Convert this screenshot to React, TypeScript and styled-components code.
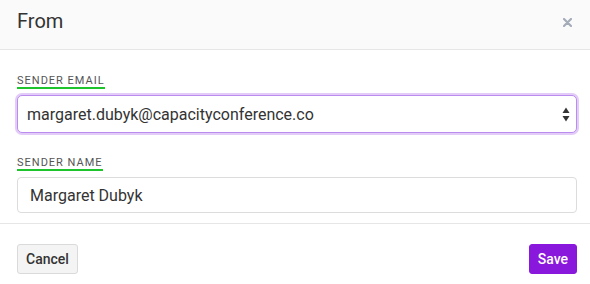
import React from 'react';
import styled, { createGlobalStyle } from 'styled-components';

const GlobalStyle = createGlobalStyle`
  html, body {
    margin: 0;
    padding: 0;
    background: #ffffff;
  }
  body {
    font-family: Roboto, "Liberation Sans", Arial, sans-serif;
    color: #333333;
  }
  * {
    box-sizing: border-box;
  }
`;

const Modal = styled.div`
  width: 590px;
  height: 284px;
  overflow: hidden;
  background: #ffffff;
  display: flex;
  flex-direction: column;
`;

const Header = styled.header`
  height: 50px;
  padding: 9px 18px 0 17px;
  background: #fafafa;
  border-bottom: 1px solid #e6e6e6;
  display: flex;
  align-items: flex-start;
  justify-content: space-between;
`;

const Title = styled.h2`
  margin: 0;
  font-size: 20px;
  line-height: 24px;
  font-weight: 400;
  color: #333333;
`;

const CloseButton = styled.button`
  margin-top: 9px;
  width: 9px;
  height: 9px;
  padding: 0;
  border: none;
  background: none;
  display: flex;
  cursor: pointer;
`;

const Body = styled.div`
  padding: 25px 13px 10px 17px;
  border-bottom: 1px solid #e6e6e6;
`;

const Field = styled.div<{ $spaced?: boolean }>`
  display: flex;
  flex-direction: column;
  align-items: flex-start;
  margin-top: ${p => (p.$spaced ? '24px' : '0')};
`;

const Label = styled.label`
  display: inline-block;
  font-size: 11px;
  line-height: 12px;
  font-weight: 400;
  letter-spacing: 1px;
  text-transform: uppercase;
  color: #555555;
  border-bottom: 2px solid #1ec42b;
  margin-bottom: 6px;
`;

const SelectWrap = styled.div`
  position: relative;
  width: 560px;
`;

const Select = styled.select`
  appearance: none;
  -webkit-appearance: none;
  width: 100%;
  height: 38px;
  padding: 0 30px 0 9px;
  font-family: Roboto, "Liberation Sans", Arial, sans-serif;
  font-size: 16px;
  color: #333333;
  background: #ffffff;
  border: 1px solid #b98ced;
  border-radius: 5px;
  box-shadow: 0 0 0 2px #e3ccf8;
  outline: none;
`;

const Arrows = styled.svg`
  position: absolute;
  right: 7px;
  top: 12px;
  pointer-events: none;
`;

const TextInput = styled.input`
  width: 560px;
  height: 36px;
  padding: 0 12px;
  font-family: Roboto, "Liberation Sans", Arial, sans-serif;
  font-size: 16px;
  color: #333333;
  background: #ffffff;
  border: 1px solid #dcdcdc;
  border-radius: 4px;
  outline: none;
`;

const Footer = styled.footer`
  padding: 20px 13px 0 17px;
  display: flex;
  justify-content: space-between;
`;

const Button = styled.button<{ $primary?: boolean }>`
  height: 30px;
  padding: 0 8px;
  font-family: Roboto, "Liberation Sans", Arial, sans-serif;
  font-size: 14px;
  font-weight: 500;
  border-radius: 3px;
  cursor: pointer;
  color: ${p => (p.$primary ? '#ffffff' : '#333333')};
  background: ${p => (p.$primary ? '#8a17dc' : '#f4f4f4')};
  border: 1px solid ${p => (p.$primary ? '#8a17dc' : '#dadada')};
`;

const App: React.FC = () => (
  <>
    <GlobalStyle />
    <Modal>
      <Header>
        <Title>From</Title>
        <CloseButton aria-label="Close">
          <svg width="9" height="9" viewBox="0 0 9 9">
            <path d="M1 1L8 8M8 1L1 8" stroke="#a4acb8" strokeWidth="2.2" strokeLinecap="round" />
          </svg>
        </CloseButton>
      </Header>
      <Body>
        <Field>
          <Label>Sender Email</Label>
          <SelectWrap>
            <Select defaultValue="margaret">
              <option value="margaret">margaret.dubyk@capacityconference.co</option>
            </Select>
            <Arrows width="8" height="15" viewBox="0 0 8 15">
              <path d="M4 0.5L7.5 6H0.5Z" fill="#333" />
              <path d="M4 14.5L7.5 9H0.5Z" fill="#333" />
            </Arrows>
          </SelectWrap>
        </Field>
        <Field $spaced>
          <Label>Sender Name</Label>
          <TextInput defaultValue="Margaret Dubyk" />
        </Field>
      </Body>
      <Footer>
        <Button>Cancel</Button>
        <Button $primary>Save</Button>
      </Footer>
    </Modal>
  </>
);

export default App;
